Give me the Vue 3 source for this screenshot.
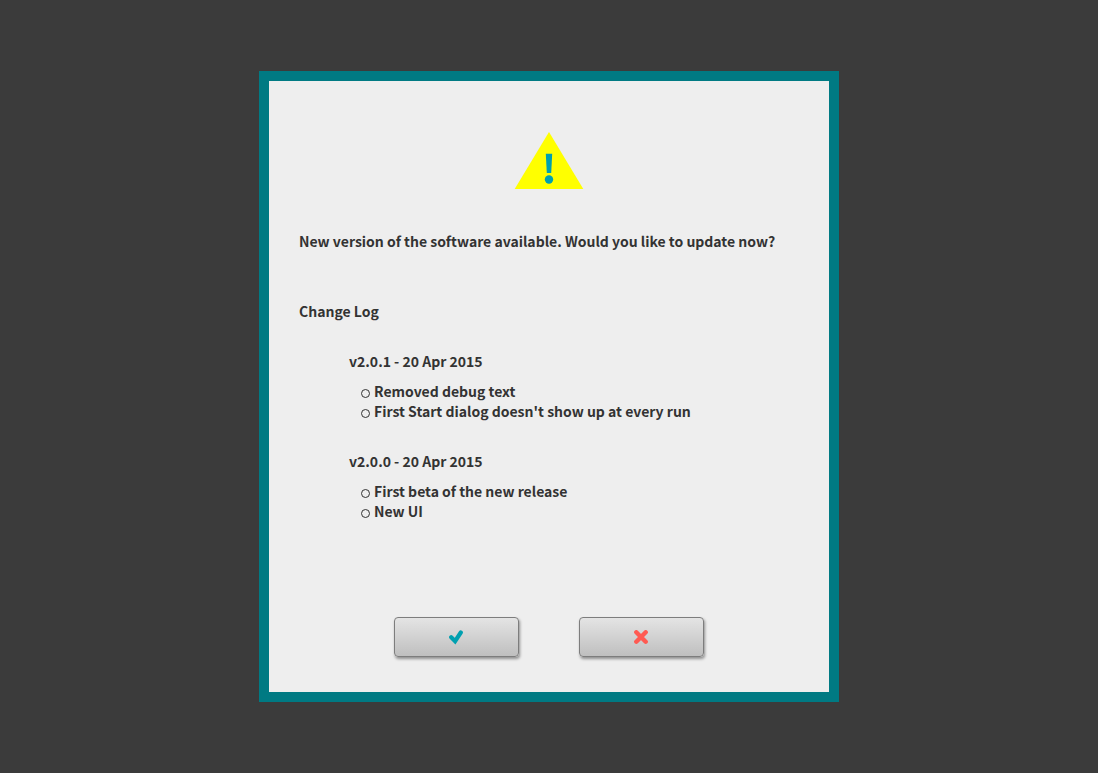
<script setup>
const releases = [
  {
    title: 'v2.0.1 - 20 Apr 2015',
    changes: ['Removed debug text', "First Start dialog doesn't show up at every run"],
  },
  {
    title: 'v2.0.0 - 20 Apr 2015',
    changes: ['First beta of the new release', 'New UI'],
  },
]
</script>

<template>
  <main class="backdrop">
    <section class="dialog" role="dialog" aria-labelledby="update-message">
      <svg class="warning" viewBox="0 0 70 58" aria-hidden="true">
        <path d="M35 1 L69.3 58 H0.7 Z" fill="#ffff00" />
        <path d="M31.8 22.8 H38.2 L37.2 42 H32.8 Z" fill="#00a0b0" />
        <circle cx="35" cy="48.5" r="4.2" fill="#00a0b0" />
      </svg>
      <p id="update-message" class="message">New version of the software available. Would you like to update now?</p>
      <h2 class="heading">Change Log</h2>
      <div class="log">
        <section v-for="release in releases" :key="release.title">
          <h3 class="version">{{ release.title }}</h3>
          <ul class="changes">
            <li v-for="change in release.changes" :key="change" class="change">
              <svg class="bullet" viewBox="0 0 9 9" aria-hidden="true">
                <circle cx="4.5" cy="4.5" r="4" fill="none" stroke="#333333" />
              </svg>
              <span>{{ change }}</span>
            </li>
          </ul>
        </section>
      </div>
      <div class="actions">
        <button type="button" class="action" aria-label="Update now">
          <svg class="icon" viewBox="0 0 15 15" aria-hidden="true">
            <path d="M2.2 7.3 L6.1 11.2 L11.8 2.5" fill="none" stroke="#00a0b0" stroke-width="4.2" stroke-linecap="round" />
          </svg>
        </button>
        <button type="button" class="action" aria-label="Cancel">
          <svg class="icon" viewBox="0 0 15 15" aria-hidden="true">
            <path d="M2.3 2.3 L11.7 11.7 M11.7 2.3 L2.3 11.7" fill="none" stroke="#ff5a52" stroke-width="4.4" stroke-linecap="round" />
          </svg>
        </button>
      </div>
    </section>
  </main>
</template>

<style>
body {
  background: #3b3b3b;
}
</style>

<style scoped>
.backdrop {
  min-height: 100vh;
  display: flex;
  align-items: center;
  justify-content: center;
  background: #3b3b3b;
  color: #333333;
  font: bold 14px/20px "Noto Sans CJK SC", "Noto Sans", sans-serif;
}
.dialog {
  box-sizing: border-box;
  width: 100%;
  max-width: 580px;
  padding: 50px 30px 35px;
  border: 10px solid #007a83;
  background: #eeeeee;
}
.warning {
  display: block;
  width: 70px;
  height: 58px;
  margin: 0 auto;
}
.message {
  margin: 42px 0 50px;
}
.heading,
.version {
  margin: 0;
  font: inherit;
}
.log {
  display: flex;
  flex-direction: column;
  gap: 30px;
  margin-top: 30px;
  padding-left: 50px;
}
.changes {
  margin: 10px 0 0;
  padding: 0 0 0 12px;
  list-style: none;
}
.change {
  display: flex;
  gap: 4px;
}
.bullet {
  flex: none;
  width: 9px;
  height: 9px;
  margin-top: 8px;
}
.actions {
  display: flex;
  justify-content: center;
  gap: 60px;
  margin-top: 96px;
}
.action {
  box-sizing: border-box;
  display: flex;
  align-items: center;
  justify-content: center;
  width: 125px;
  height: 40px;
  padding: 0;
  border: 1px solid #7d7d7d;
  border-radius: 4px;
  background: linear-gradient(#e4e4e4, #bfbfbf);
  box-shadow: 1px 2px 3px rgba(0, 0, 0, 0.4);
}
.icon {
  width: 15px;
  height: 15px;
}
</style>
